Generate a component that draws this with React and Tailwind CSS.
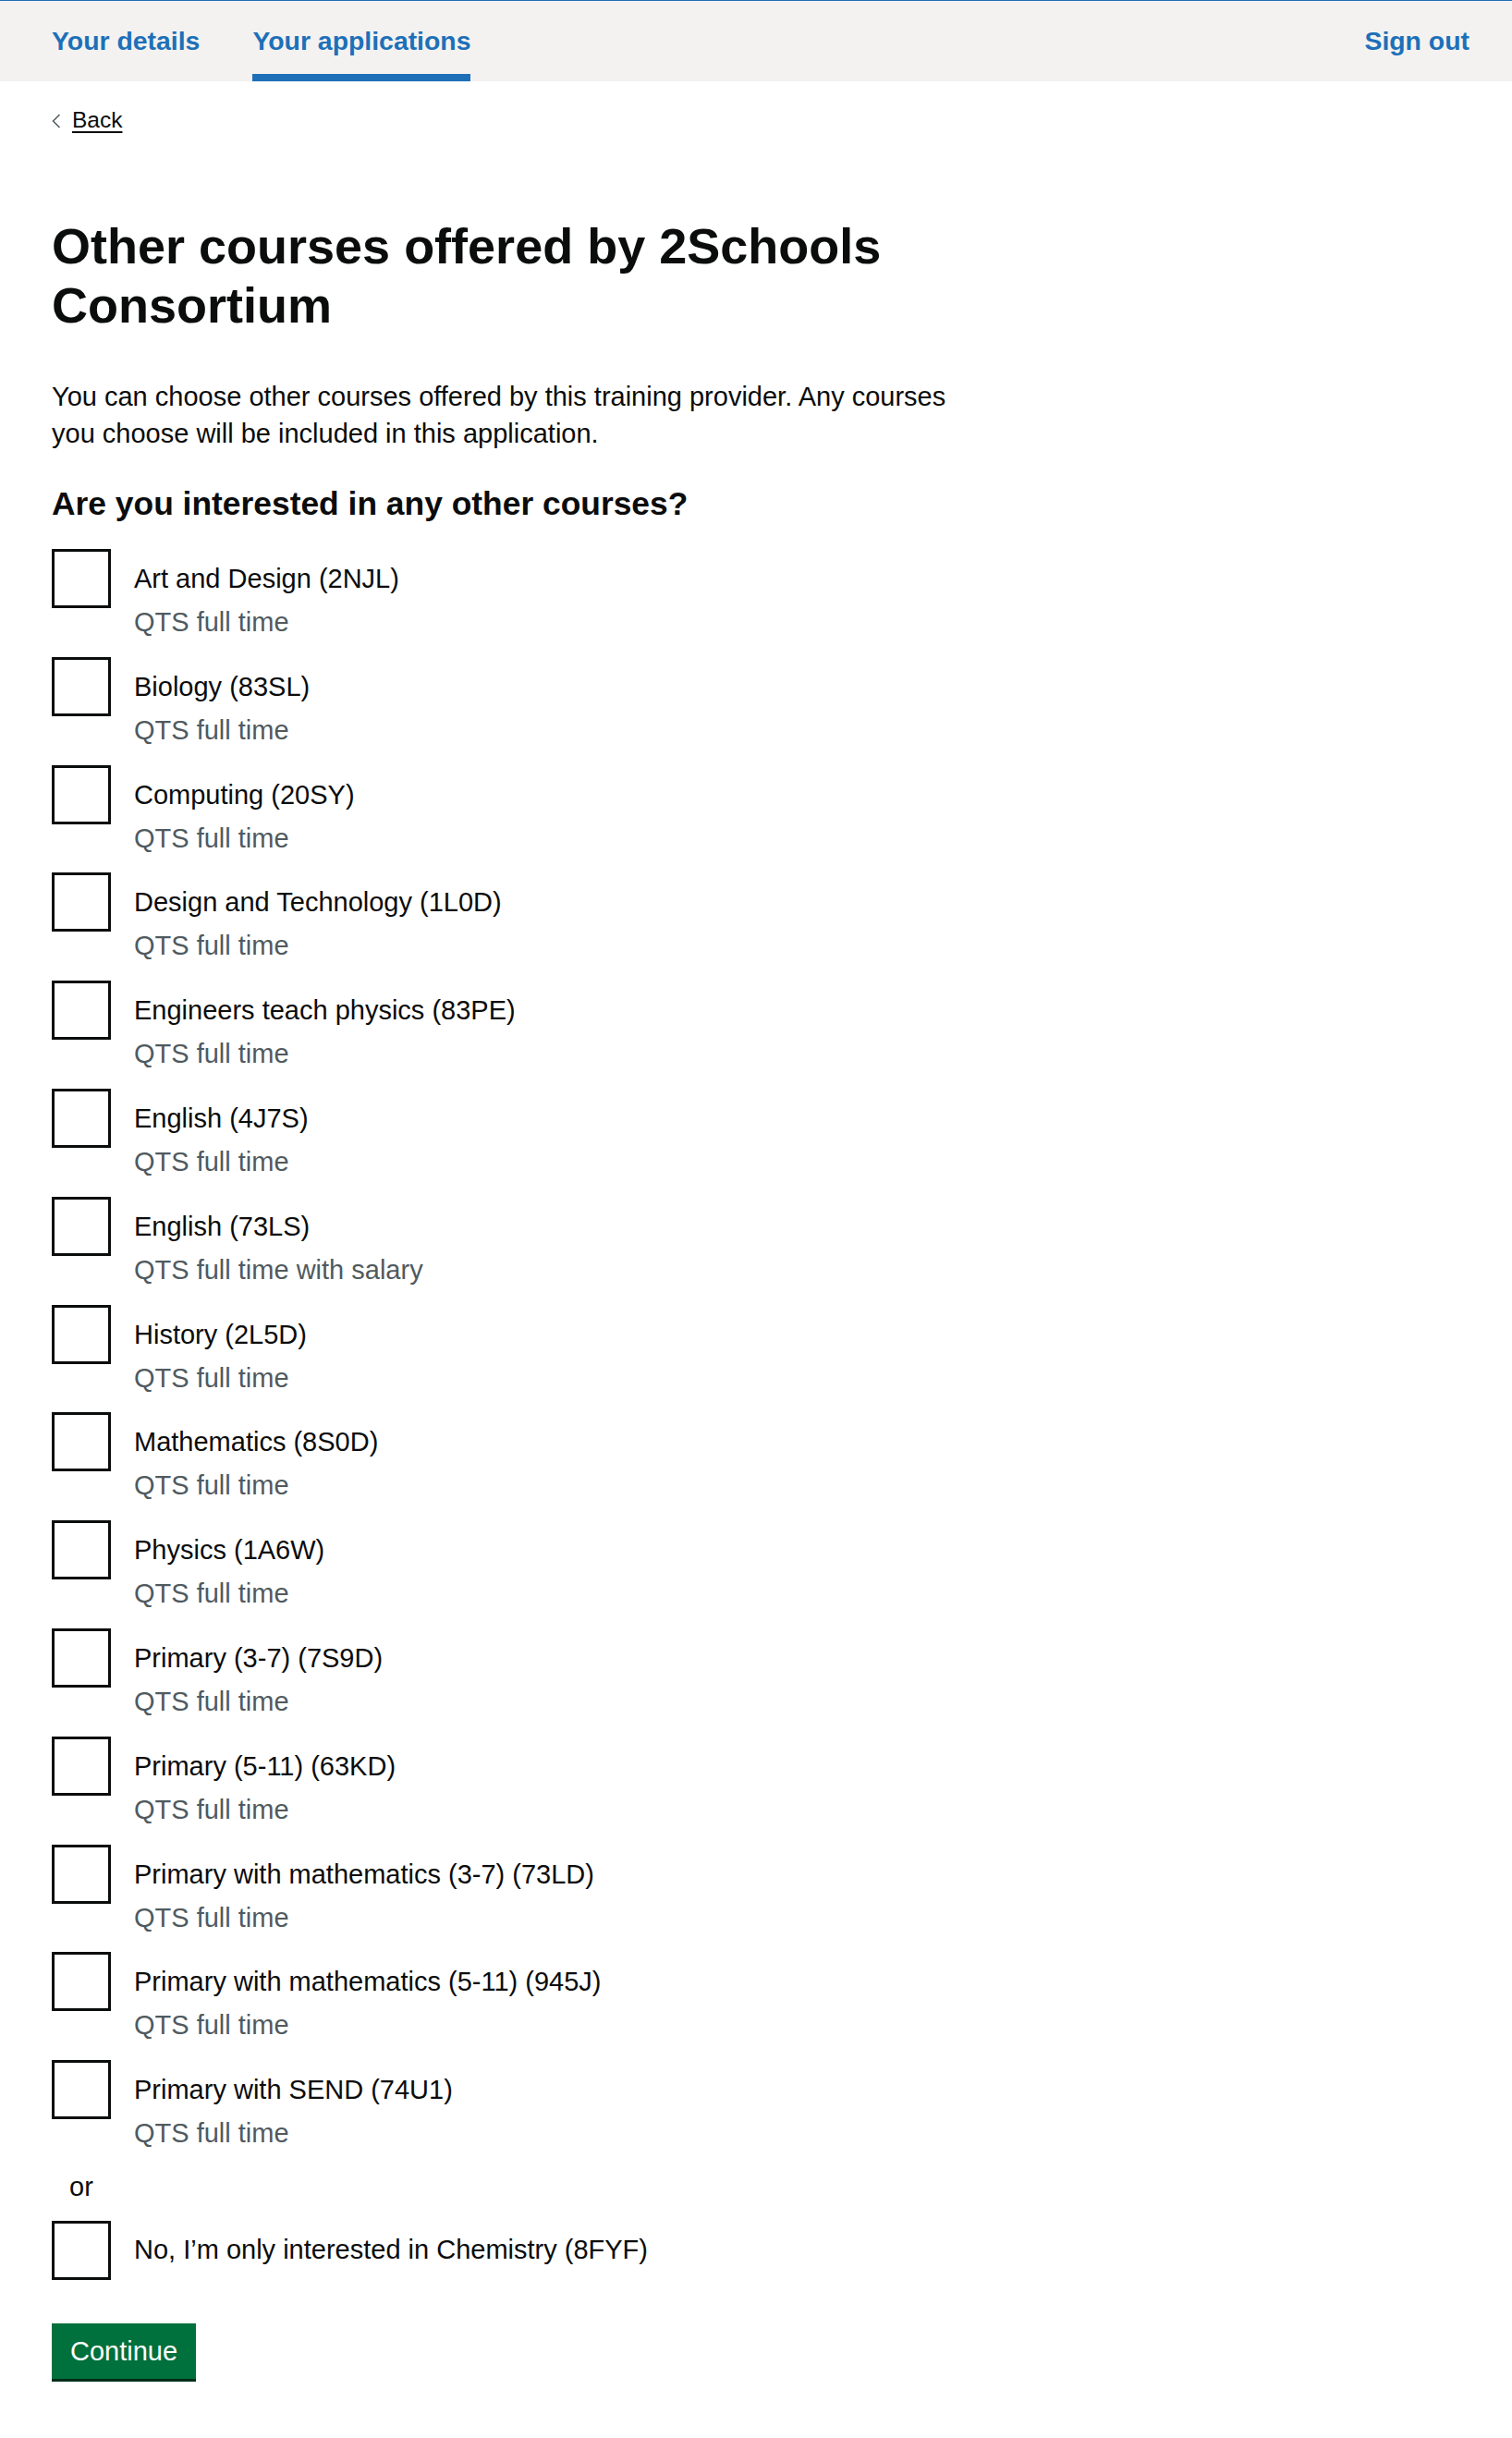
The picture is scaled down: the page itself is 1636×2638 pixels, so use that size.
import React from "react";

const courses = [
  ["Art and Design (2NJL)", "QTS full time"],
  ["Biology (83SL)", "QTS full time"],
  ["Computing (20SY)", "QTS full time"],
  ["Design and Technology (1L0D)", "QTS full time"],
  ["Engineers teach physics (83PE)", "QTS full time"],
  ["English (4J7S)", "QTS full time"],
  ["English (73LS)", "QTS full time with salary"],
  ["History (2L5D)", "QTS full time"],
  ["Mathematics (8S0D)", "QTS full time"],
  ["Physics (1A6W)", "QTS full time"],
  ["Primary (3-7) (7S9D)", "QTS full time"],
  ["Primary (5-11) (63KD)", "QTS full time"],
  ["Primary with mathematics (3-7) (73LD)", "QTS full time"],
  ["Primary with mathematics (5-11) (945J)", "QTS full time"],
  ["Primary with SEND (74U1)", "QTS full time"],
];

function Box() {
  return <div className="w-[64px] h-[64px] shrink-0 border-[3px] border-[#0b0c0c] bg-white" />;
}

export default function App() {
  return (
    <div className="min-h-[2638px] bg-white text-[#0b0c0c] font-['Liberation_Sans',Arial,sans-serif]">
      <header className="border-t border-[#1d70b8] bg-[#f3f2f1] h-[88px] flex justify-between pl-[56px] pr-[46px]">
        <nav className="flex gap-[57px] h-full">
          <a className="flex items-center h-full text-[28.4px] font-bold text-[#1d70b8]">Your details</a>
          <a className="flex items-center h-full text-[28.4px] font-bold text-[#1d70b8] pt-[8px] border-b-[8px] border-[#1d70b8]">
            Your applications
          </a>
        </nav>
        <a className="flex items-center h-full text-[28.4px] font-bold text-[#1d70b8]">Sign out</a>
      </header>

      <main className="px-[56px]">
        <div className="mt-[27px] flex items-center gap-[12px] h-[30px]">
          <svg width="10" height="16" viewBox="0 0 10 16" className="mt-[1px]">
            <polyline points="8.5,1 1.5,8 8.5,15" fill="none" stroke="#505a5f" strokeWidth="1.5" />
          </svg>
          <a className="text-[24.5px] leading-[30px] underline decoration-[1.5px] underline-offset-[4px] text-[#0b0c0c]">Back</a>
        </div>

        <div className="max-w-[1000px]">
          <h1 className="mt-[89px] text-[54px] leading-[64px] font-bold">
            Other courses offered by 2Schools Consortium
          </h1>
          <p className="mt-[47px] text-[29px] leading-[40px]">
            You can choose other courses offered by this training provider. Any courses you choose will be included in this application.
          </p>
          <h2 className="mt-[34px] text-[35.4px] leading-[44px] font-bold">Are you interested in any other courses?</h2>

          <div className="mt-[27px] flex flex-col">
            {courses.map(([name, hint]) => (
              <div key={name} className="flex items-start gap-[25px] mb-[17.8px]">
                <Box />
                <div className="pt-[12px]">
                  <div className="text-[29px] leading-[40px]">{name}</div>
                  <div className="mt-[7px] text-[29px] leading-[40px] text-[#505a5f]">{hint}</div>
                </div>
              </div>
            ))}
          </div>

          <div className="w-[64px] text-center text-[29px] leading-[40px]">or</div>

          <div className="mt-[17px] flex items-start gap-[25px]">
            <Box />
            <div className="pt-[11px] text-[29px] leading-[40px]">No, I’m only interested in Chemistry (8FYF)</div>
          </div>

          <button className="mt-[47px] h-[60px] px-[20px] bg-[#00703c] text-white text-[29px] leading-[40px] shadow-[0_3px_0_#002d18]">
            Continue
          </button>
        </div>
      </main>
    </div>
  );
}
